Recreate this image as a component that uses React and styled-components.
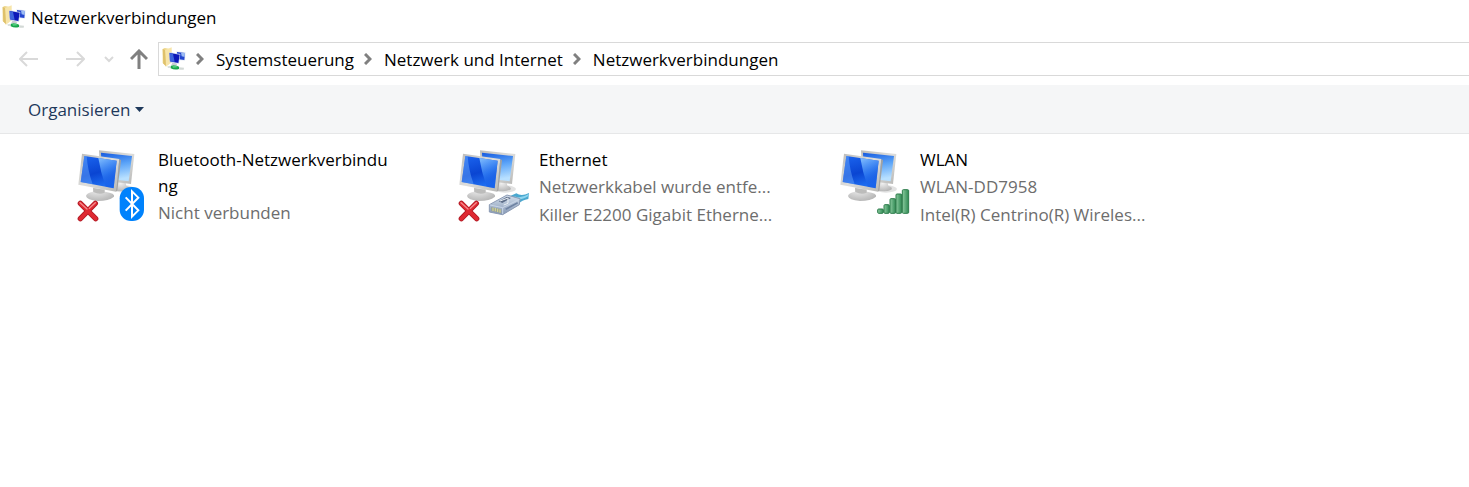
import React from 'react'
import styled, { createGlobalStyle } from 'styled-components'


const crumbs = ['Systemsteuerung', 'Netzwerk und Internet', 'Netzwerkverbindungen']

const connections = [
    { name: 'Bluetooth-Netzwerkverbindung', details: ['Nicht verbunden'], type: 'bluetooth', off: true },
    { name: 'Ethernet', details: ['Netzwerkkabel wurde entfe...', 'Killer E2200 Gigabit Etherne...'], type: 'cable', off: true },
    { name: 'WLAN', details: ['WLAN-DD7958', 'Intel(R) Centrino(R) Wireles...'], type: 'wifi' },
]

function FolderIcon() {
    return (
        <svg width="24" height="24" viewBox="0 0 72 72" aria-hidden="true">
            <path d="M2 6 L8 3 L20 5 L20 52 L8 54 L2 48 Z" fill="#eed78c" />
            <path d="M9 9 L29 1 L29 46 L12 59 Z" fill="#f7e5aa" />
            <path d="M2 6 L9 9 L12 59 L4 49 Z" fill="#dfc16b" />
            <path d="M43 13 L71 16 L69 41 L43 39 Z" fill="#e6ebf5" />
            <path d="M45 15 L69 18 L67 39 L45 36 Z" fill="#2446cf" />
            <path d="M57 17 L69 18 L68 30 L59 28 Z" fill="#9dbcf3" />
            <path d="M21 16 L55 21 L51 50 L23 46 Z" fill="#c6d2ee" />
            <path d="M23 18 L53 23 L49 48 L24 43 Z" fill="#0b17b8" />
            <path d="M23 18 L33 20 L38 45 L24 43 Z" fill="#3c63dc" />
            <path d="M31 47 L43 49 L46 55 L28 54 Z" fill="#c9ced3" />
            <path d="M16 58 L30 56 L31 62 L18 63 Z" fill="#d9dfdc" />
            <path d="M27 56 Q37 53 51 59 L51 66 Q38 70 26 64 Z" fill="#18a54b" />
            <path d="M31 58 L43 57 L46 61 L33 62 Z" fill="#58d284" />
            <path d="M51 61 L66 62 L65 68 L52 68 Z" fill="#d3d9d6" />
        </svg>
    )
}

function ConnectionIcon({ type, off }) {
    return (
        <svg width="72" height="74" viewBox="18 24 216 222" aria-hidden="true">
            <defs>
                <linearGradient id="screen" x1="0" y1="0" x2="0.3" y2="1">
                    <stop offset="0" stopColor="#1c66f0" />
                    <stop offset="0.6" stopColor="#0a45d2" />
                    <stop offset="1" stopColor="#1d6cf0" />
                </linearGradient>
                <linearGradient id="backScreen" x1="0" y1="0" x2="0.2" y2="1">
                    <stop offset="0" stopColor="#1459e0" />
                    <stop offset="0.5" stopColor="#5ba4f8" />
                    <stop offset="1" stopColor="#b8e0ff" />
                </linearGradient>
                <linearGradient id="shine" x1="0" y1="0" x2="0.3" y2="1">
                    <stop offset="0" stopColor="#8cc6ff" stopOpacity="0.95" />
                    <stop offset="0.55" stopColor="#3d8cfa" stopOpacity="0.7" />
                    <stop offset="1" stopColor="#0d4fe0" stopOpacity="0.3" />
                </linearGradient>
                <linearGradient id="frame" x1="0" y1="0" x2="1" y2="1">
                    <stop offset="0" stopColor="#bcbcba" />
                    <stop offset="0.5" stopColor="#dededc" />
                    <stop offset="1" stopColor="#b7b7b5" />
                </linearGradient>
                <radialGradient id="foot" cx="0.4" cy="0.3" r="0.7">
                    <stop offset="0" stopColor="#f0f0f0" />
                    <stop offset="1" stopColor="#b8b8b8" />
                </radialGradient>
                <linearGradient id="bar" x1="0" y1="0" x2="1" y2="0">
                    <stop offset="0" stopColor="#8bcb9f" />
                    <stop offset="1" stopColor="#2f8953" />
                </linearGradient>
                <linearGradient id="plug" x1="0" y1="0" x2="0" y2="1">
                    <stop offset="0" stopColor="#d3deec" />
                    <stop offset="1" stopColor="#8598b4" />
                </linearGradient>
            </defs>
            <ellipse cx="162" cy="147" rx="33" ry="11" fill="#e2e2e2" />
            <path d="M142 120 L166 124 L169 137 Q184 142 178 149 Q160 158 133 150 Z" fill="url(#foot)" />
            <path d="M87 31 L193 42 L183 132 L91 120 Z" fill="url(#frame)" />
            <path d="M93 38 L186 48 L176 124 L96 114 Z" fill="url(#backScreen)" />
            <path d="M70 134 L104 139 L105 155 Q137 160 132 170 Q116 183 84 183 Q50 180 48 168 Q49 159 69 155 Z" fill="url(#foot)" />
            <path d="M69 144 L103 149 L104 158 Q88 165 70 156 Z" fill="#bcbcbb" />
            <path d="M36 41 L148 57 L138 155 L25 134 Z" fill="url(#frame)" />
            <path d="M148 57 L153 61 L142 151 L138 155 Z" fill="#a2a2a1" />
            <path d="M43 48 L140 62 L131 145 L32 126 Z" fill="url(#screen)" />
            <path d="M85 54 L140 62 L131 145 L107 140 Q92 98 85 54 Z" fill="url(#shine)" />
            <path d="M43 48 L50 49 Q53 91 68 133 L32 126 Z" fill="#6fb0ff" opacity="0.45" />
            {off && (
                <g strokeLinecap="round">
                    <path d="M31 190 L77 236 M76 190 L31 236" stroke="#b01a25" strokeWidth="16" />
                    <path d="M31 190 L77 236 M76 190 L31 236" stroke="#df2932" strokeWidth="11" />
                    <path d="M30 188 L51 207 M76 188 L58 205" stroke="#f58b8d" strokeWidth="4" />
                </g>
            )}
            {type === 'bluetooth' && (
                <g>
                    <rect x="149" y="141" width="73" height="102" rx="34" fill="#0082fc" />
                    <path d="M167 172 L205 211 L186 230 L186 154 L205 173 L167 212" fill="none" stroke="#fff" strokeWidth="6" strokeLinejoin="miter" />
                </g>
            )}
            {type === 'cable' && (
                <g>
                    <path d="M176 169 L196 160 Q211 171 234 159 L232 177 Q213 180 201 193 L188 190 Z" fill="#4aa8d0" />
                    <path d="M190 169 Q211 177 233 162 L232 168 Q210 182 194 177 Z" fill="#8fd6f0" />
                    <path d="M115 194 L168 165 L207 176 L205 194 L155 224 L115 216 Z" fill="url(#plug)" stroke="#8b9ab4" strokeWidth="3" />
                    <path d="M117 195 L155 203 L205 178 M155 203 L155 222" fill="none" stroke="#c9d6e8" strokeWidth="3" />
                    <path d="M143 184 L168 170 L180 174 L154 189 Z" fill="#5d6d88" />
                    <path d="M147 183 L171 174 L171 190 L158 195" fill="none" stroke="#e8eef4" strokeWidth="3" />
                    <path d="M120 201 L151 208 L151 220 L120 213 Z" fill="#98a39c" />
                    <path d="M126 203 V213 M133 204 V214 M140 206 V216 M147 208 V218" stroke="#dedb8c" strokeWidth="3" />
                    <path d="M164 208 L200 188" stroke="#6f83a3" strokeWidth="5" />
                </g>
            )}
            {type === 'wifi' && (
                <g fill="url(#bar)" stroke="#2c7c4b" strokeWidth="3">
                    <rect x="137" y="207" width="17" height="13" rx="3" />
                    <rect x="156" y="194" width="16" height="26" rx="3" />
                    <rect x="174" y="176" width="17" height="44" rx="3" />
                    <rect x="192" y="162" width="17" height="58" rx="3" />
                    <rect x="211" y="149" width="19" height="71" rx="3" />
                </g>
            )}
        </svg>
    )
}

function App() {
    return (
        <Window>
            <GlobalStyle />

            <TitleBar>
                <FolderIcon />
                <Title>Netzwerkverbindungen</Title>
            </TitleBar>

            <NavBar>
                <NavButtons>
                    <NavButton aria-label="Zurück" disabled>
                        <svg width="20" height="16" viewBox="0 0 20 16"><path d="M19 8 H2 M8 1 L1 8 L8 15" /></svg>
                    </NavButton>
                    <NavButton aria-label="Vorwärts" disabled>
                        <svg width="20" height="16" viewBox="0 0 20 16"><path d="M1 8 H18 M12 1 L19 8 L12 15" /></svg>
                    </NavButton>
                    <NavButton aria-label="Verlauf" disabled>
                        <svg width="10" height="8" viewBox="0 0 10 8"><path d="M1 2 L5 6 L9 2" /></svg>
                    </NavButton>
                    <NavButton aria-label="Nach oben">
                        <svg width="18" height="20" viewBox="0 0 18 20"><path d="M9 20 V3 M1 10 L9 2 L17 10" /></svg>
                    </NavButton>
                </NavButtons>
                <AddressBar aria-label="Adresse">
                    <FolderIcon />
                    {crumbs.map((crumb) => (
                        <Crumb key={crumb}>
                            <svg width="8" height="12" viewBox="0 0 8 12" aria-hidden="true">
                                <path d="M1 1 L6 6 L1 11" fill="none" stroke="#808080" strokeWidth="3" />
                            </svg>
                            <CrumbLink href="#">{crumb}</CrumbLink>
                        </Crumb>
                    ))}
                </AddressBar>
            </NavBar>

            <Toolbar>
                <MenuButton>
                    Organisieren
                    <svg width="9" height="5" viewBox="0 0 9 5" aria-hidden="true"><path d="M0 0 H9 L4.5 5 Z" fill="#1e395b" /></svg>
                </MenuButton>
            </Toolbar>

            <Connections>
                {connections.map((item) => (
                    <Connection key={item.name}>
                        <ConnectionIcon type={item.type} off={item.off} />
                        <Info>
                            <Name>{item.name}</Name>
                            {item.details.map((line) => <Detail key={line}>{line}</Detail>)}
                        </Info>
                    </Connection>
                ))}
            </Connections>
        </Window>
    )
}

export default App


const GlobalStyle = createGlobalStyle`

    * {
        box-sizing: border-box;
    }

    body {
        margin: 0;
        background: #fff;
        color: #000;
        font-family: "Open Sans", "Noto Sans", sans-serif;
        font-size: 17px;
    }

    button {
        border: 0;
        padding: 0;
        background: none;
        font: inherit;
    }

    svg {
        display: block;
        flex-shrink: 0;
    }

`

const Window = styled.div`

    min-height: 100vh;
    overflow: hidden;

`

const TitleBar = styled.header`

    display: flex;
    align-items: center;
    gap: 5px;
    height: 34px;
    padding-left: 2px;

`

const Title = styled.h1`

    margin: 0;
    padding-top: 2px;
    font-size: 17px;
    font-weight: 400;
    line-height: 24px;

`

const NavBar = styled.div`

    display: flex;
    align-items: center;
    padding: 8px 0 9px;

`

const NavButtons = styled.div`

    display: grid;
    grid-template-columns: 46px 46px 22px 38px;
    padding-left: 6px;

`

const NavButton = styled.button`

    display: flex;
    align-items: center;
    justify-content: center;
    height: 26px;

    path {
        fill: none;
        stroke: ${(props) => (props.disabled ? '#d9d9d9' : '#808080')};
        stroke-width: ${(props) => (props.disabled ? 2 : 3)};
    }

`

const AddressBar = styled.nav`

    display: flex;
    flex: 1;
    align-items: center;
    height: 34px;
    padding-left: 3px;
    border: 1px solid #d9d9d9;
    border-right: 0;

`

const Crumb = styled.span`

    display: flex;
    align-items: center;
    gap: 12px;
    margin-left: 10px;

`

const CrumbLink = styled.a`

    padding-top: 2px;
    color: #000;
    line-height: 24px;
    text-decoration: none;

`

const Toolbar = styled.div`

    display: flex;
    align-items: center;
    height: 49px;
    padding-left: 28px;
    background: #f5f6f7;
    border-bottom: 1px solid #e6e7e8;

`

const MenuButton = styled.button`

    display: flex;
    align-items: center;
    gap: 5px;
    color: #1e395b;

`

const Connections = styled.ul`

    display: flex;
    flex-wrap: wrap;
    margin: 0;
    padding: 13px 0 0 76px;
    list-style: none;

`

const Connection = styled.li`

    display: flex;
    align-items: flex-start;
    gap: 10px;
    width: 381px;

    svg {
        margin-top: 1px;
    }

`

const Info = styled.div`

    width: 232px;

`

const Name = styled.div`

    line-height: 26px;
    word-break: break-all;

`

const Detail = styled.div`

    color: #6d6d6d;
    line-height: 28px;
    white-space: nowrap;

`
